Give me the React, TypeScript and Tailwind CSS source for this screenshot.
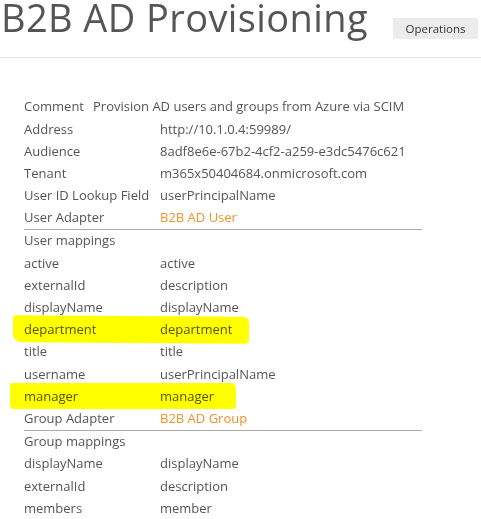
import React from "react";

type Row = {
  label: string;
  value?: string;
  link?: boolean;
  mark?: "a" | "b";
};

const top: Row[] = [
  { label: "Address", value: "http://10.1.0.4:59989/" },
  { label: "Audience", value: "8adf8e6e-67b2-4cf2-a259-e3dc5476c621" },
  { label: "Tenant", value: "m365x50404684.onmicrosoft.com" },
  { label: "User ID Lookup Field", value: "userPrincipalName" },
  { label: "User Adapter", value: "B2B AD User", link: true },
];

const userRows: Row[] = [
  { label: "User mappings" },
  { label: "active", value: "active" },
  { label: "externalId", value: "description" },
  { label: "displayName", value: "displayName" },
  { label: "department", value: "department", mark: "a" },
  { label: "title", value: "title" },
  { label: "username", value: "userPrincipalName" },
  { label: "manager", value: "manager", mark: "b" },
  { label: "Group Adapter", value: "B2B AD Group", link: true },
];

const groupRows: Row[] = [
  { label: "Group mappings" },
  { label: "displayName", value: "displayName" },
  { label: "externalId", value: "description" },
  { label: "members", value: "member" },
];

const PropRow = ({ row }: { row: Row }) => {
  return (
    <div className="relative flex items-center h-[22.2px]">
      <span className="w-[136px] shrink-0">{row.label}</span>
      {row.value && (
        <span className={row.link ? "text-[#f0922c]" : ""}>{row.value}</span>
      )}
      {row.mark === "a" && (
        <div className="absolute left-[-11px] top-[-3px] w-[236px] h-[27px] bg-[#ffff00] mix-blend-multiply rounded-[3px_6px_4px_8px] skew-y-[0.4deg]" />
      )}
      {row.mark === "b" && (
        <div className="absolute left-[-14px] top-[-2px] w-[226px] h-[26px] bg-[#ffff00] mix-blend-multiply rounded-[2px_5px_3px_4px]" />
      )}
    </div>
  );
};

export default function App() {
  return (
    <div className="w-[481px] h-[519px] overflow-hidden bg-white text-[#555] font-['Open_Sans','Liberation_Sans',sans-serif]">
      <div className="flex items-start justify-between h-[58px] border-b border-[#e5e5e5]">
        <h1 className="ml-[1px] text-[38px] leading-[35px] font-normal tracking-[0.4px] text-[#555]">
          B2B AD Provisioning
        </h1>
        <button className="mt-[18px] mr-[3px] w-[85px] h-[21px] bg-[#ececec] text-[11.5px] text-[#333]">
          Operations
        </button>
      </div>

      <div className="pl-[24px] pt-[38px] text-[13px] w-[422px]">
        <div className="flex items-center gap-[9px] h-[22.2px]">
          <span>Comment</span>
          <span>Provision AD users and groups from Azure via SCIM</span>
        </div>
        {top.map((r) => (
          <PropRow key={r.label} row={r} />
        ))}
        <div className="h-[1px] bg-[#aaa]" />
        {userRows.map((r) => (
          <PropRow key={r.label} row={r} />
        ))}
        <div className="h-[1px] bg-[#aaa]" />
        {groupRows.map((r) => (
          <PropRow key={"g" + r.label} row={r} />
        ))}
      </div>
    </div>
  );
}
